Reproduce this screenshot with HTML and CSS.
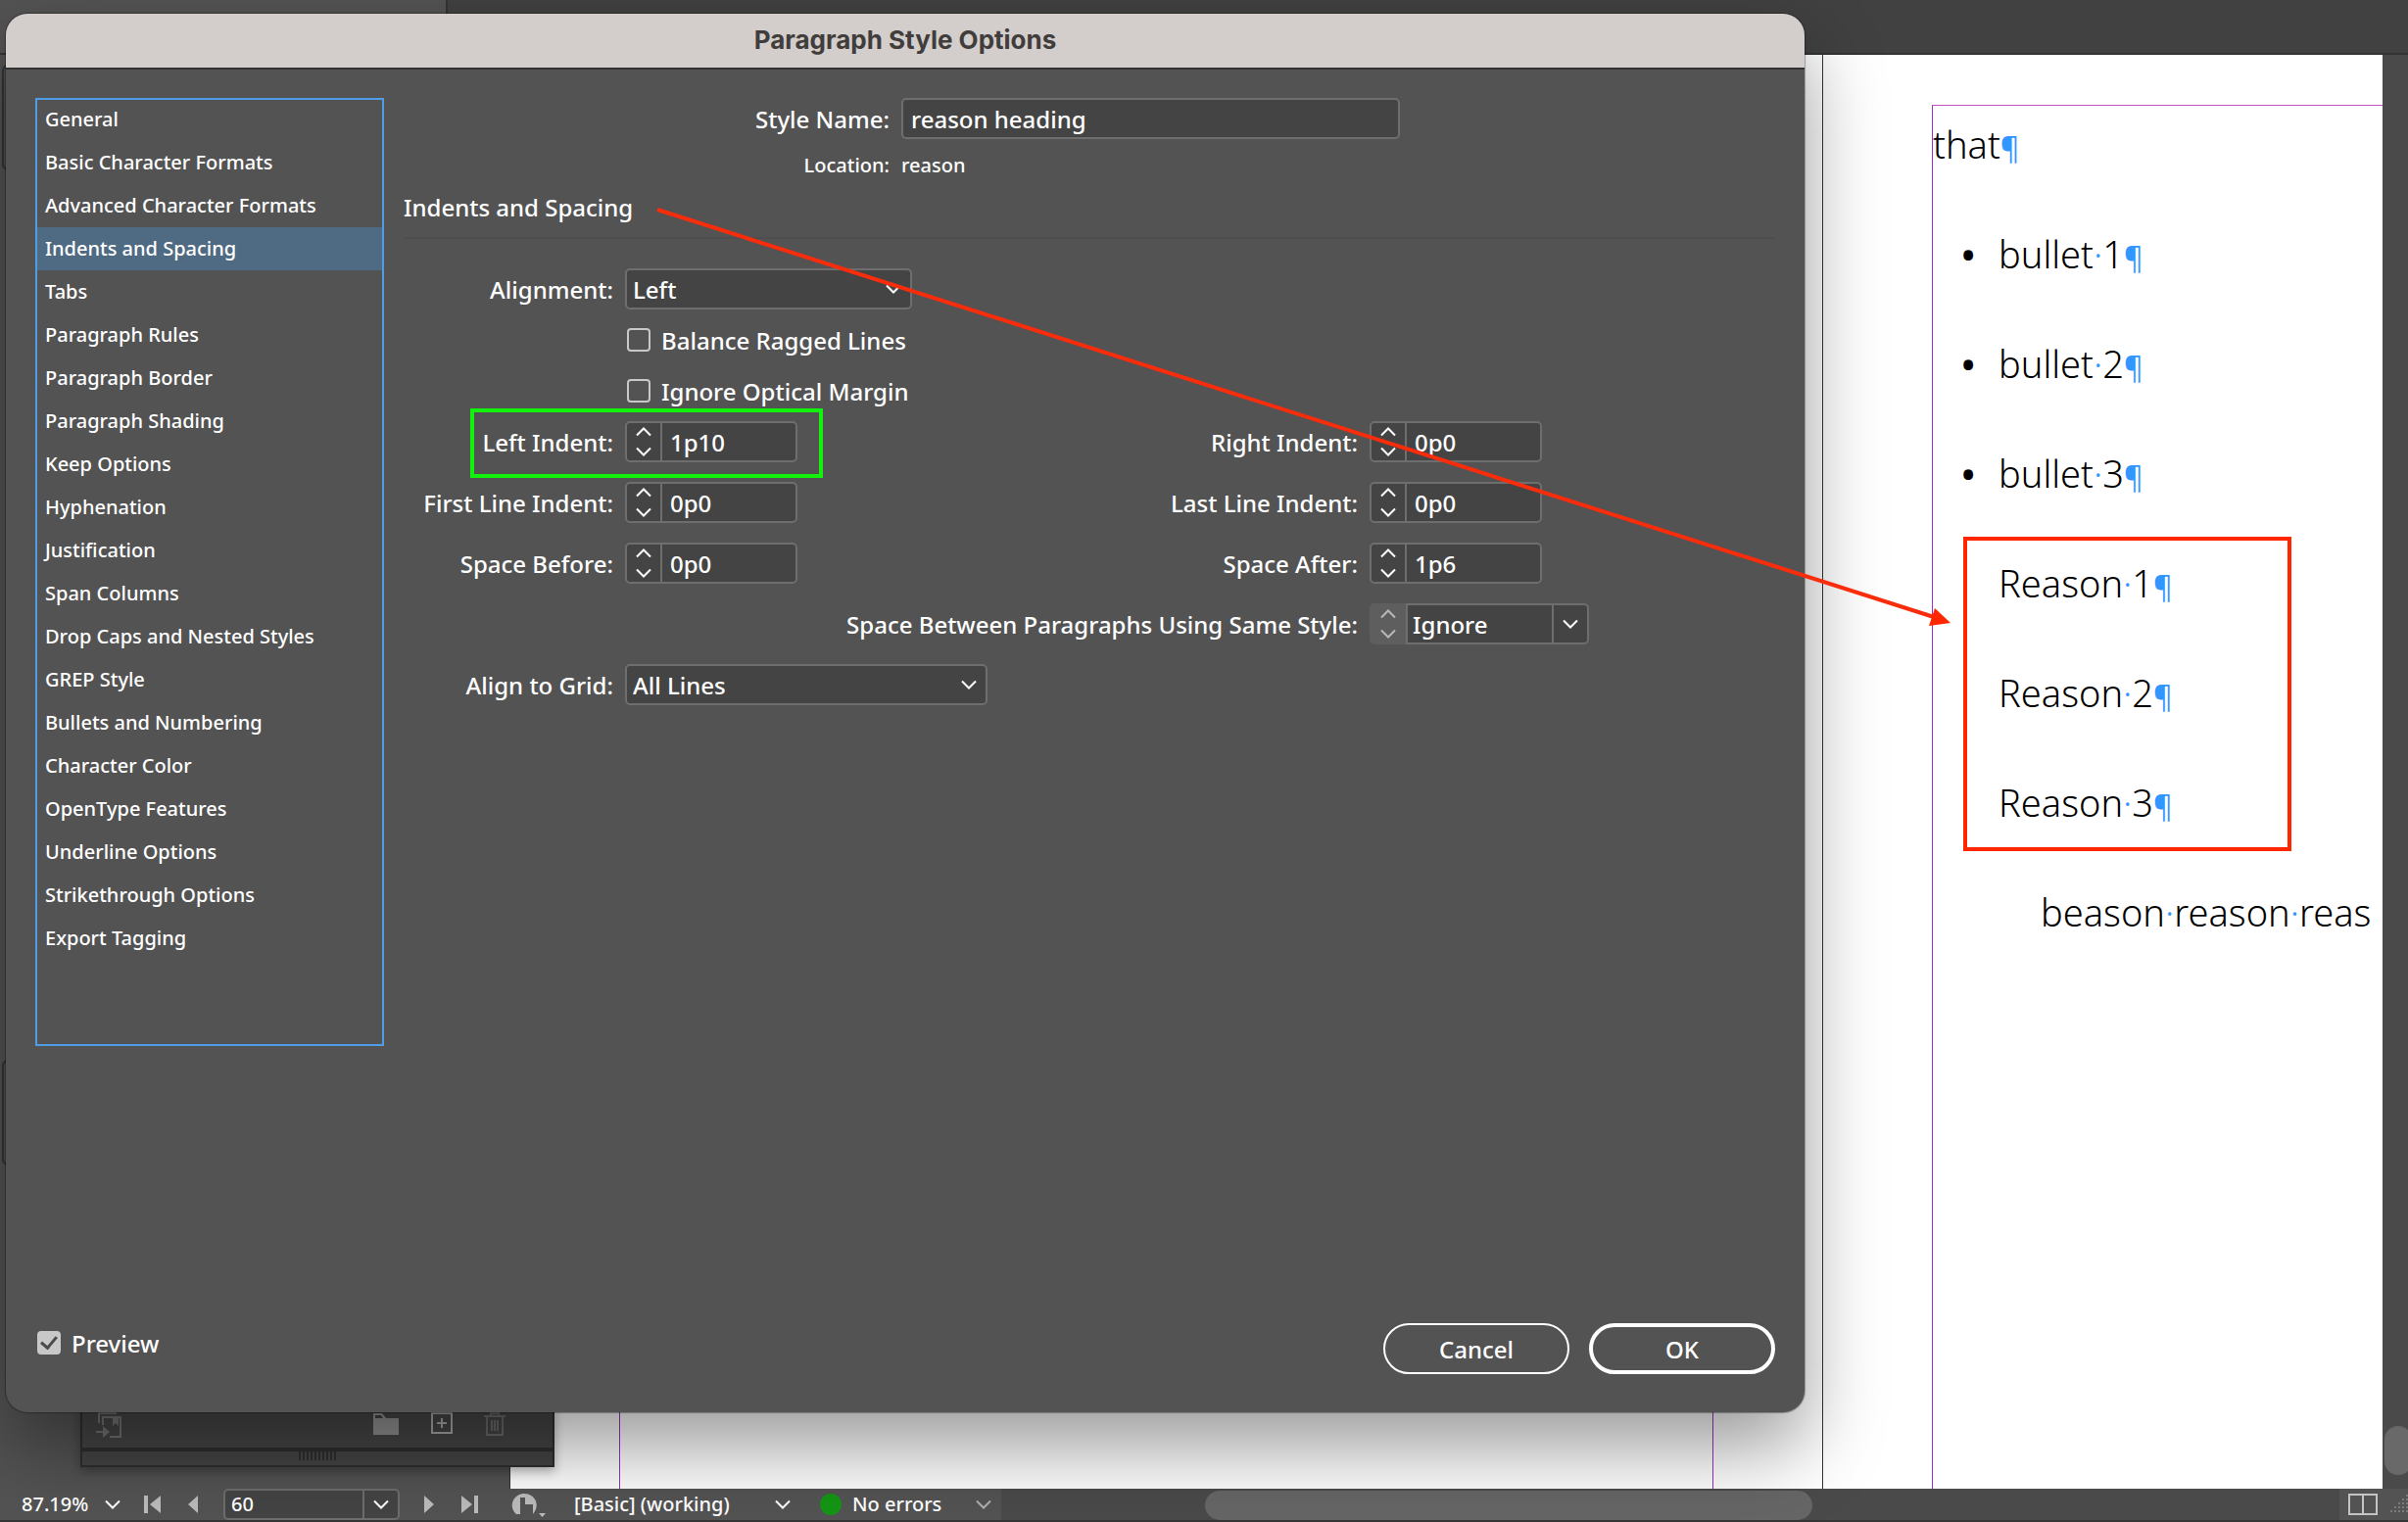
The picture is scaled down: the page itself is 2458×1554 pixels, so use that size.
FILE: index.html
```
<!DOCTYPE html>
<html lang="en">
<head>
  <meta charset="UTF-8" />
  <title>Paragraph Style Options</title>
  <link rel="stylesheet" href="styles.css">
</head>
<body>

  <svg class="sprite" aria-hidden="true">
    <symbol id="chevron-down" viewBox="0 0 16 10"><path d="M1 1.500l7 7 7-7" fill="none" stroke="currentColor" stroke-width="2"/></symbol>
    <symbol id="chevron-up" viewBox="0 0 16 10"><path d="M1 8.500l7-7 7 7" fill="none" stroke="currentColor" stroke-width="2"/></symbol>
  </svg>

  <div class="app">
    <div class="tab-bar"><div class="tab-bar-left"></div></div>

    <div class="workspace">
      <div class="pasteboard"></div>
      <div class="page page-left"><div class="frame"></div></div>
      <div class="page page-right">
        <div class="frame story">
          <p>that<i>¶</i></p>
          <ul class="bullets">
            <li>bullet<b>·</b>1<i>¶</i></li>
            <li>bullet<b>·</b>2<i>¶</i></li>
            <li>bullet<b>·</b>3<i>¶</i></li>
          </ul>
          <p class="reason">Reason<b>·</b>1<i>¶</i></p>
          <p class="reason">Reason<b>·</b>2<i>¶</i></p>
          <p class="reason">Reason<b>·</b>3<i>¶</i></p>
          <p class="sub-reason">beason<b>·</b>reason<b>·</b>reas</p>
        </div>
      </div>
      <div class="scroll-y"><div class="thumb-y"></div></div>

      <div class="side-panel side-panel-top"></div>
      <div class="side-panel side-panel-low"></div>

      <div class="styles-panel">
        <div class="panel-tools">
          <svg class="tool-load" width="28" height="28" viewBox="0 0 28 28" fill="none" stroke="#717171" stroke-width="2">
            <path d="M3 11V1h18M7 13V5h18v20H14"/>
            <path d="M17 5v9l3-3 3 3V5z" fill="#717171" stroke="none"/>
            <path d="M0 20h9"/><path d="M7 14l7 6-7 6z" fill="#717171" stroke="none"/>
          </svg>
          <svg width="28" height="24" viewBox="0 0 28 24"><path d="M1 1h9l4 5h13v17H1z" fill="#8f8f8f"/><path d="M3 3h6l2 3H3z" fill="#404040"/></svg>
          <svg class="tool-new" width="22" height="22" viewBox="0 0 22 22" fill="none" stroke="#a5a5a5" stroke-width="2"><path d="M1 1h20v20H1zM11 6v10M6 11h10"/></svg>
          <svg width="22" height="24" viewBox="0 0 22 24" fill="none" stroke="#686868" stroke-width="2"><path d="M0 4h22M7 4V1h8v3M3 4v19h16V4M8 8v11M11 8v11M14 8v11"/></svg>
        </div>
        <div class="panel-grip"><span></span></div>
      </div>
    </div>

    <div class="status-bar">
      <div class="status-items">
        <span class="zoom-value">87.19%</span>
        <svg class="chevron"><use href="#chevron-down"/></svg>
        <svg class="first-page" width="17" height="18" viewBox="0 0 17 18"><path d="M0 0h4v18H0zM17 0v18L6 9z"/></svg>
        <svg class="prev-page" width="10" height="18" viewBox="0 0 10 18"><path d="M10 0v18L0 9z"/></svg>
        <div class="page-box">
          <input type="text" value="60" aria-label="Page">
          <button type="button" aria-label="Choose page"><svg class="chevron"><use href="#chevron-down"/></svg></button>
        </div>
        <svg class="next-page" width="10" height="18" viewBox="0 0 10 18"><path d="M0 0v18l10-9z"/></svg>
        <svg class="last-page" width="17" height="18" viewBox="0 0 17 18"><path d="M13 0h4v18h-4zM0 0v18l11-9z"/></svg>
        <svg class="preflight" width="36" height="26" viewBox="0 0 36 26"><path d="M4 22A12.500 12 0 1 1 24 20l-2 3V13h-8V6H9v17H5z"/><path d="M16 5l6 6h-6zM28 22h7l-3.500 4z"/></svg>
        <span class="profile">[Basic] (working)</span>
        <svg class="chevron"><use href="#chevron-down"/></svg>
        <span class="status-dot"></span>
        <span class="errors">No errors</span>
        <svg class="chevron chevron-dim"><use href="#chevron-down"/></svg>
      </div>
      <div class="scroll-x"><div class="thumb-x"></div></div>
      <div class="corner">
        <svg width="30" height="22" viewBox="0 0 30 22" fill="none" stroke="#c4c4c4" stroke-width="2"><path d="M1 1h28v20H1zM15 1v20"/></svg>
        <svg width="18" height="20" viewBox="0 0 18 20" fill="#7a7a7a"><path d="M0 16h2v2H0zM4 16h2v2H4zM8 16h2v2H8zM12 16h2v2h-2zM16 16h2v2h-2zM4 12h2v2H4zM8 12h2v2H8zM12 12h2v2h-2zM16 12h2v2h-2zM8 8h2v2H8zM12 8h2v2h-2zM16 8h2v2h-2zM12 4h2v2h-2zM16 4h2v2h-2zM16 0h2v2h-2z"/></svg>
      </div>
    </div>
  </div>

  <form class="dialog">
    <h1 class="dialog-title">Paragraph Style Options</h1>

    <div class="dialog-body">
      <nav class="categories">
        <a href="#">General</a>
        <a href="#">Basic Character Formats</a>
        <a href="#">Advanced Character Formats</a>
        <a href="#" class="selected">Indents and Spacing</a>
        <a href="#">Tabs</a>
        <a href="#">Paragraph Rules</a>
        <a href="#">Paragraph Border</a>
        <a href="#">Paragraph Shading</a>
        <a href="#">Keep Options</a>
        <a href="#">Hyphenation</a>
        <a href="#">Justification</a>
        <a href="#">Span Columns</a>
        <a href="#">Drop Caps and Nested Styles</a>
        <a href="#">GREP Style</a>
        <a href="#">Bullets and Numbering</a>
        <a href="#">Character Color</a>
        <a href="#">OpenType Features</a>
        <a href="#">Underline Options</a>
        <a href="#">Strikethrough Options</a>
        <a href="#">Export Tagging</a>
      </nav>

      <div class="settings">
        <div class="style-info">
          <label for="styleName">Style Name:</label>
          <input id="styleName" class="field" type="text" value="reason heading">
          <span class="location">Location:</span>
          <span class="location location-value">reason</span>
        </div>

        <h2>Indents and Spacing</h2>

        <div class="fields">
          <label class="first" for="alignment">Alignment:</label>
          <div class="select-box select-short">
            <select id="alignment" class="field"><option>Left</option></select>
            <svg class="chevron"><use href="#chevron-down"/></svg>
          </div>

          <div class="checks">
            <label><input type="checkbox"> Balance Ragged Lines</label>
            <label><input type="checkbox"> Ignore Optical Margin</label>
          </div>

          <label class="first" for="leftIndent">Left Indent:</label>
          <div class="stepper field">
            <div class="arrows"><button type="button" aria-label="Increase"><svg class="chevron"><use href="#chevron-up"/></svg></button><button type="button" aria-label="Decrease"><svg class="chevron"><use href="#chevron-down"/></svg></button></div>
            <input id="leftIndent" type="text" value="1p10">
          </div>
          <label for="rightIndent">Right Indent:</label>
          <div class="stepper field">
            <div class="arrows"><button type="button" aria-label="Increase"><svg class="chevron"><use href="#chevron-up"/></svg></button><button type="button" aria-label="Decrease"><svg class="chevron"><use href="#chevron-down"/></svg></button></div>
            <input id="rightIndent" type="text" value="0p0">
          </div>

          <label class="first" for="firstLine">First Line Indent:</label>
          <div class="stepper field">
            <div class="arrows"><button type="button" aria-label="Increase"><svg class="chevron"><use href="#chevron-up"/></svg></button><button type="button" aria-label="Decrease"><svg class="chevron"><use href="#chevron-down"/></svg></button></div>
            <input id="firstLine" type="text" value="0p0">
          </div>
          <label for="lastLine">Last Line Indent:</label>
          <div class="stepper field">
            <div class="arrows"><button type="button" aria-label="Increase"><svg class="chevron"><use href="#chevron-up"/></svg></button><button type="button" aria-label="Decrease"><svg class="chevron"><use href="#chevron-down"/></svg></button></div>
            <input id="lastLine" type="text" value="0p0">
          </div>

          <label class="first" for="spaceBefore">Space Before:</label>
          <div class="stepper field">
            <div class="arrows"><button type="button" aria-label="Increase"><svg class="chevron"><use href="#chevron-up"/></svg></button><button type="button" aria-label="Decrease"><svg class="chevron"><use href="#chevron-down"/></svg></button></div>
            <input id="spaceBefore" type="text" value="0p0">
          </div>
          <label for="spaceAfter">Space After:</label>
          <div class="stepper field">
            <div class="arrows"><button type="button" aria-label="Increase"><svg class="chevron"><use href="#chevron-up"/></svg></button><button type="button" aria-label="Decrease"><svg class="chevron"><use href="#chevron-down"/></svg></button></div>
            <input id="spaceAfter" type="text" value="1p6">
          </div>

          <label class="between-label" for="spaceBetween">Space Between Paragraphs Using Same Style:</label>
          <div class="between">
            <div class="arrows arrows-disabled"><button type="button" disabled aria-label="Increase"><svg class="chevron"><use href="#chevron-up"/></svg></button><button type="button" disabled aria-label="Decrease"><svg class="chevron"><use href="#chevron-down"/></svg></button></div>
            <div class="select-box">
              <select id="spaceBetween" class="field"><option>Ignore</option></select>
              <span class="select-end"><svg class="chevron"><use href="#chevron-down"/></svg></span>
            </div>
          </div>

          <label class="first" for="alignGrid">Align to Grid:</label>
          <div class="select-box select-long">
            <select id="alignGrid" class="field"><option>All Lines</option></select>
            <svg class="chevron"><use href="#chevron-down"/></svg>
          </div>
        </div>
      </div>
    </div>

    <div class="dialog-footer">
      <label class="preview"><input type="checkbox" checked> Preview</label>
      <div class="actions">
        <button type="button">Cancel</button>
        <button type="submit" class="primary">OK</button>
      </div>
    </div>
  </form>

  <!-- Callouts drawn over everything -->
  <div class="callout callout-field"></div>
  <div class="callout callout-result"></div>
  <svg class="callout-arrow" aria-hidden="true">
    <path d="M671 214L1974 630" stroke="#f92c0c" stroke-width="4"/>
    <path d="M1975 621L1969 639 1991 636z" fill="#ff2600"/>
  </svg>

</body>
</html>
```

FILE: styles.css
```
* {
  box-sizing: border-box;
}

body {
  margin: 0;
  font-family: "Noto Sans", "Open Sans", sans-serif;
  font-size: 24px;
  font-weight: 500;
  color: white;
  background-color: #535353;
  overflow: hidden;
}

input, select, button {
  font: inherit;
  color: inherit;
  margin: 0;
  padding: 0;
}

button {
  background: none;
  border: none;
}

svg {
  display: block;
  flex: none;
}

.sprite {
  position: absolute;
  width: 0;
  height: 0;
}

.chevron {
  width: 16px;
  height: 10px;
}

.chevron-dim {
  color: #b0b0b0;
}

/* Application window */
.app {
  display: flex;
  flex-direction: column;
  height: 100vh;
}

.tab-bar {
  height: 56px;
  background-color: #414141;
  border-bottom: 2px solid #333;
}

.tab-bar-left {
  width: 457px;
  height: 54px;
  background-color: #535353;
  border-right: 2px solid #333;
}

.workspace {
  position: relative;
  flex: 1;
  display: grid;
  grid-template-columns: 521px 1340fr 571fr 26px;
  min-height: 0;
}

.pasteboard {
  border-right: 1px solid #333;
}

.page {
  min-width: 0;
  overflow: hidden;
  background-color: white;
  padding: 51px 0 0 111px;
}

.page-left {
  padding-right: 111px;
  border-right: 1px solid #333;
}

.frame {
  height: 100%;
  border: 1px solid #9b2fc4;
  border-top: 1px solid #c44fc0;
  border-bottom: none;
}

.story {
  border-right: none;
  color: black;
  font-size: 38px;
  font-weight: 300;
  line-height: 78px;
  white-space: nowrap;
}

.story p,
.story li {
  margin: 0 0 34px;
}

/* Hidden characters */
.story i,
.story b {
  font-style: normal;
  font-weight: 300;
  color: #3296ff;
}

.story i {
  font-size: 30px;
  font-weight: 400;
  line-height: 1;
}

.story .bullets,
.story .reason {
  padding-left: 67px;
}

.bullets {
  margin: 0;
  list-style: none;
}

.bullets li::before {
  content: "•";
  display: inline-block;
  width: 38px;
  margin-left: -38px;
  font-weight: 600;
}

.story .sub-reason {
  padding-left: 110px;
}

.scroll-y {
  background-color: #4a4a4a;
  display: flex;
  flex-direction: column;
  justify-content: flex-end;
  padding: 0 0 14px 2px;
  overflow: hidden;
}

.thumb-y {
  width: 28px;
  height: 50px;
  border-radius: 14px;
  background-color: #696969;
}

/* Panels that show round the dialog */
.side-panel {
  position: absolute;
  left: 2px;
  width: 60px;
  height: 108px;
  border: 2px solid #333;
  border-radius: 6px;
}

.side-panel-top {
  top: 10px;
}

.side-panel-low {
  bottom: 330px;
}

.styles-panel {
  position: absolute;
  left: 82px;
  bottom: 22px;
  width: 484px;
  background-color: #444;
  border: 2px solid #2e2e2e;
  box-shadow: 0 4px 10px rgba(0,0,0,0.3);
}

.panel-tools {
  display: flex;
  align-items: flex-start;
  height: 44px;
  padding: 4px 48px 0 14px;
  border-bottom: 4px solid #2e2e2e;
}

.tool-load {
  margin-right: auto;
}

.tool-new {
  margin: 0 32px;
}

.panel-grip {
  display: flex;
  justify-content: center;
  height: 14px;
}

.panel-grip span {
  width: 38px;
  height: 9px;
  background: repeating-linear-gradient(90deg, #2e2e2e 0 2px, transparent 2px 4px);
}

/* Status bar */
.status-bar {
  display: flex;
  height: 34px;
  font-size: 20px;
  line-height: 32px;
  background-color: #4a4a4a;
  border-bottom: 2px solid #363636;
}

.status-items {
  display: flex;
  align-items: center;
  width: 1022px;
  padding-left: 22px;
  background-color: #535353;
  fill: #bcbcbc;
}

.zoom-value {
  width: 85px;
}

.first-page {
  margin-left: 24px;
}

.prev-page {
  margin: 0 26px 0 28px;
}

.page-box {
  display: flex;
  width: 180px;
  height: 32px;
  border: 2px solid #6e6e6e;
  border-radius: 5px;
  background-color: #444;
}

.page-box input {
  flex: 1;
  min-width: 0;
  padding-left: 6px;
  border: none;
  background: none;
}

.page-box button {
  display: flex;
  align-items: center;
  justify-content: center;
  width: 36px;
  border-left: 2px solid #6e6e6e;
}

.next-page {
  margin: 0 28px 0 25px;
}

.preflight {
  margin-left: 34px;
}

.profile {
  width: 205px;
  margin-left: 28px;
}

.status-dot {
  width: 22px;
  height: 22px;
  margin: 0 11px 0 30px;
  border-radius: 50%;
  background-color: #149614;
}

.errors {
  width: 126px;
}

.scroll-x {
  flex: 1;
  padding: 2px 538px 0 208px;
}

.thumb-x {
  height: 30px;
  border-radius: 15px;
  background-color: #666;
}

.corner {
  display: flex;
  align-items: center;
  justify-content: space-between;
  width: 70px;
  padding-left: 9px;
  background-color: #535353;
}

/* Dialog window */
.dialog {
  position: absolute;
  top: 14px;
  left: 6px;
  width: 1836px;
  max-width: calc(100vw - 12px);
  overflow: hidden;
  border-radius: 22px;
  background-color: #535353;
  box-shadow: 0 0 1px 1px rgba(0,0,0,0.3), 0 36px 80px rgba(0,0,0,0.4);
}

.dialog-title {
  margin: 0;
  height: 57px;
  border-bottom: 2px solid #333;
  background-color: #d3cecb;
  color: #403d3c;
  font-family: Inter, sans-serif;
  font-size: 26px;
  font-weight: 700;
  line-height: 54px;
  text-align: center;
}

.dialog-body {
  display: flex;
  gap: 20px;
  padding: 29px 30px 0;
}

.categories {
  width: 356px;
  height: 968px;
  outline: 2px solid #4f9de6;
  outline-offset: -2px;
}

.categories a {
  display: block;
  padding-left: 10px;
  color: white;
  font-size: 20px;
  line-height: 44px;
  text-decoration: none;
}

.categories .selected {
  background-color: #4f6a83;
}

.settings {
  flex: 1;
}

.style-info {
  display: grid;
  grid-template-columns: 496px 509px;
  gap: 10px 12px;
  align-items: center;
  text-align: right;
}

.location {
  font-size: 20px;
  line-height: 34px;
}

.location-value {
  text-align: left;
}

.settings h2 {
  margin: 10px 0 30px;
  padding-bottom: 14px;
  border-bottom: 2px solid #4e4e4e;
  font-size: 24px;
  font-weight: 500;
  line-height: 32px;
}

.field {
  height: 42px;
  border: 2px solid #6e6e6e;
  border-radius: 5px;
  background-color: #444;
}

#styleName {
  padding-left: 8px;
}

.fields {
  display: grid;
  grid-template-columns: 214px 176px 1fr 414px;
  gap: 20px 12px;
  align-items: center;
  text-align: right;
  white-space: nowrap;
}

.first {
  grid-column: 1;
}

.select-box {
  position: relative;
  grid-column: 2 / 4;
}

.select-short {
  width: 293px;
}

.select-long {
  width: 370px;
}

.select-box select {
  display: block;
  width: 100%;
  padding-left: 6px;
  appearance: none;
}

.select-box > .chevron {
  position: absolute;
  top: 16px;
  right: 11px;
}

.checks {
  grid-column: 2 / 4;
  display: flex;
  flex-direction: column;
  gap: 30px;
}

.checks label {
  display: flex;
  align-items: center;
  gap: 11px;
  height: 22px;
  padding-left: 2px;
}

input[type="checkbox"] {
  appearance: none;
  display: grid;
  place-items: center;
  flex: none;
  width: 24px;
  height: 24px;
  border: 2px solid #c8c8c8;
  border-radius: 4px;
}

input[type="checkbox"]:checked {
  background-color: #c8c8c8;
}

input[type="checkbox"]:checked::before {
  content: "";
  width: 7px;
  height: 13px;
  margin-bottom: 4px;
  border: solid #4a4a4a;
  border-width: 0 3px 3px 0;
  transform: rotate(40deg);
}

.stepper {
  display: flex;
  width: 176px;
}

.stepper input {
  flex: 1;
  min-width: 0;
  padding-left: 8px;
  border: none;
  background: none;
}

.arrows {
  display: flex;
  flex-direction: column;
  justify-content: center;
  gap: 10px;
  width: 36px;
  border-right: 2px solid #6e6e6e;
}

.arrows button {
  display: flex;
  justify-content: center;
}

.between-label {
  grid-column: 3;
}

.between {
  display: flex;
}

.between .select-box {
  width: 187px;
}

.between select {
  padding-left: 5px;
  border-radius: 0 5px 5px 0;
}

.arrows-disabled {
  width: 37px;
  border: none;
  border-radius: 5px 0 0 5px;
  background-color: #5e5e5e;
  color: #b8b8b8;
}

.select-end {
  position: absolute;
  top: 2px;
  right: 2px;
  display: flex;
  align-items: center;
  justify-content: center;
  width: 36px;
  height: 38px;
  border-left: 2px solid #6e6e6e;
  pointer-events: none;
}

.dialog-footer {
  display: flex;
  justify-content: space-between;
  margin-top: 283px;
  padding: 0 30px 39px 32px;
}

.preview {
  display: flex;
  align-items: center;
  gap: 11px;
  height: 40px;
}

.actions {
  display: flex;
  gap: 20px;
}

.actions button {
  width: 190px;
  height: 52px;
  border: 2px solid white;
  border-radius: 26px;
}

.actions .primary {
  border-width: 4px;
}

/* Callouts */
.callout {
  position: absolute;
  border: 4px solid #ff2600;
  pointer-events: none;
}

.callout-field {
  top: 417px;
  left: 480px;
  width: 360px;
  height: 71px;
  border-color: #12f20c;
}

.callout-result {
  top: 548px;
  left: 2004px;
  width: 335px;
  height: 321px;
}

.callout-arrow {
  position: absolute;
  top: 0;
  left: 0;
  width: 100%;
  height: 100%;
  pointer-events: none;
}
```
